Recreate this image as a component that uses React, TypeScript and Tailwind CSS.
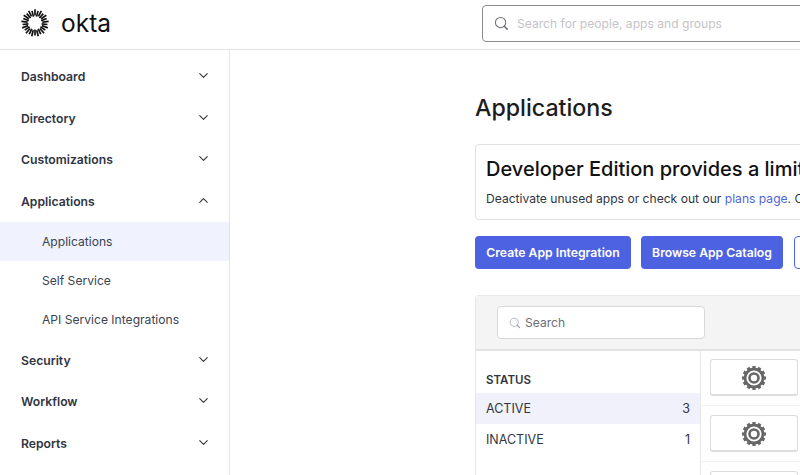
import * as React from "react";
import { ChevronDown, ChevronUp } from "lucide-react";

function OktaLogo() {
  // sunburst of short radial strokes around an open centre
  const rays = Array.from({ length: 26 }, (_, i) => (i * 360) / 26);
  return (
    <svg width="28" height="28" viewBox="0 0 28 28" className="mb-[3px] shrink-0">
      {rays.map((deg, i) => (
        <line
          key={deg}
          x1="14"
          y1={i % 2 ? 1.5 : 0.3}
          x2="14"
          y2={i % 2 ? 7.4 : 6.6}
          stroke="#111"
          strokeWidth="1.7"
          strokeLinecap="butt"
          transform={`rotate(${deg} 14 14)`}
        />
      ))}
    </svg>
  );
}

function SearchGlyph({ size, color }: { size: number; color: string }) {
  return (
    <svg width={size} height={size} viewBox="0 0 16 16" fill="none" className="shrink-0">
      <circle cx="7" cy="7" r="5.5" stroke={color} strokeWidth="1.1" />
      <path d="M11 11l3 3" stroke={color} strokeWidth="1.6" strokeLinecap="round" />
    </svg>
  );
}

function GearIcon() {
  const teeth = Array.from({ length: 12 }, (_, i) => i * 30);
  return (
    <svg width="26" height="26" viewBox="0 0 26 26" fill="none">
      {teeth.map((deg) => (
        <rect key={deg} x="11.4" y="1" width="3.2" height="3.4" fill="#666" transform={`rotate(${deg} 13 13)`} />
      ))}
      <circle cx="13" cy="13" r="9" stroke="#666" strokeWidth="2.8" />
      <circle cx="13" cy="13" r="4.5" stroke="#666" strokeWidth="2.6" />
    </svg>
  );
}

function NavGroup({ label, open }: { label: string; open?: boolean }) {
  return (
    <div className="flex h-[41.6px] items-center justify-between pl-[21px] pr-[18px]">
      <span className="pt-[1px] text-[12.2px] font-semibold text-[#2f3542]">{label}</span>
      {open ? (
        <ChevronUp size={15} color="#333" strokeWidth={1.7} className="mb-[2px]" />
      ) : (
        <ChevronDown size={15} color="#333" strokeWidth={1.7} className="mb-[2px]" />
      )}
    </div>
  );
}

function NavSub({ label, active }: { label: string; active?: boolean }) {
  return (
    <div className={`flex h-[39px] items-center pl-[42px] pt-[1px] text-[12.1px] text-[#3b4250] ${active ? "bg-[#f0f3fd]" : ""}`}>
      {label}
    </div>
  );
}

function AppRow() {
  return (
    <div className="border-b border-[#f2f2f2] pb-[9px] pt-[9px] pl-[9px]">
      <div className="flex h-[37px] w-[88px] items-center justify-center rounded-[3px] border border-[#dcdcdc] border-b-2 bg-white pt-[2px]">
        <GearIcon />
      </div>
    </div>
  );
}

export default function App() {
  return (
    <div className="flex h-[475px] w-[800px] flex-col overflow-hidden bg-white font-['Inter',sans-serif]">
      <header className="flex h-[50px] shrink-0 items-center border-b border-[#e4e4e4]">
        <div className="flex w-[482px] shrink-0 items-center gap-[12px] pl-[21px]">
          <OktaLogo />
          <span className="pb-[2px] text-[24.5px] leading-none font-normal text-[#111]">okta</span>
        </div>
        <div className="mb-[2px] flex h-[37px] w-[400px] shrink-0 items-center gap-[8px] rounded-[4px] border border-[#8c8c96] pl-[11px]">
          <SearchGlyph size={15} color="#6e6e78" />
          <span className="pt-[1px] text-[12.1px] text-[#c4c4c8]">Search for people, apps and groups</span>
        </div>
      </header>

      <div className="flex min-h-0 flex-1">
        <nav className="w-[230px] shrink-0 border-r border-[#e4e4e4] pt-[6px]">
          <NavGroup label="Dashboard" />
          <NavGroup label="Directory" />
          <NavGroup label="Customizations" />
          <NavGroup label="Applications" open />
          <NavSub label="Applications" active />
          <NavSub label="Self Service" />
          <NavSub label="API Service Integrations" />
          <NavGroup label="Security" />
          <NavGroup label="Workflow" />
          <NavGroup label="Reports" />
        </nav>

        <main className="w-[600px] shrink-0 pl-[245px] pt-[43px]">
          <h1 className="text-[23.2px] leading-[30px] font-medium text-[#1d1d21]">Applications</h1>

          <section className="mt-[21px] h-[76px] w-[500px] whitespace-nowrap rounded-[4px] border border-[#e1e1e1] pl-[10px] pt-[10px]">
            <h2 className="text-[20px] leading-[28px] font-medium text-[#111]">Developer Edition provides a limited number of apps</h2>
            <p className="mt-[7px] text-[12.1px] leading-[18px] text-[#2f3542]">
              Deactivate unused apps or check out our <span className="text-[#4f65e0]">plans page</span>. Contact us for more.
            </p>
          </section>

          <div className="mt-[16px] flex gap-[10px]">
            <button className="flex h-[33px] w-[156px] shrink-0 items-center justify-center rounded-[4px] bg-[#4d62e0] pt-[1px] text-[12.2px] font-semibold text-white">
              Create App Integration
            </button>
            <button className="flex h-[33px] w-[142px] shrink-0 items-center justify-center rounded-[4px] bg-[#4d62e0] pt-[1px] text-[12.2px] font-semibold text-white">
              Browse App Catalog
            </button>
            <button className="ml-[1px] h-[33px] w-[60px] shrink-0 rounded-[4px] border border-[#4d62e0] bg-white" />
          </div>

          <section className="mt-[26px] w-[500px] rounded-t-[4px] border-l border-t border-[#e8e8e8]">
            <div className="flex h-[55px] items-center border-b-2 border-[#e2e2e2] bg-[#f4f4f4] pl-[21px]">
              <div className="flex h-[33px] w-[208px] items-center gap-[4px] rounded-[4px] border border-[#d8d8d8] bg-white pl-[11px]">
                <SearchGlyph size={12} color="#a8a8ae" />
                <span className="pt-[1px] text-[12.1px] text-[#6e6e78]">Search</span>
              </div>
            </div>
            <div className="flex">
              <div className="w-[225px] shrink-0 border-r border-[#e8e8e8] pt-[21px]">
                <div className="pl-[10px] text-[11.5px] leading-[16px] font-semibold text-[#2f3542]">STATUS</div>
                <div className="mt-[5px] flex h-[31px] items-center justify-between bg-[#f0f1fa] pl-[10px] pr-[10px] pt-[1px] text-[12.5px] text-[#2f3542]">
                  <span>ACTIVE</span>
                  <span>3</span>
                </div>
                <div className="flex h-[31px] items-center justify-between pl-[10px] pr-[10px] pt-[1px] text-[12.5px] text-[#2f3542]">
                  <span>INACTIVE</span>
                  <span>1</span>
                </div>
              </div>
              <div className="-mt-[1px] flex-1">
                <AppRow />
                <AppRow />
                <AppRow />
              </div>
            </div>
          </section>
        </main>
      </div>
    </div>
  );
}
